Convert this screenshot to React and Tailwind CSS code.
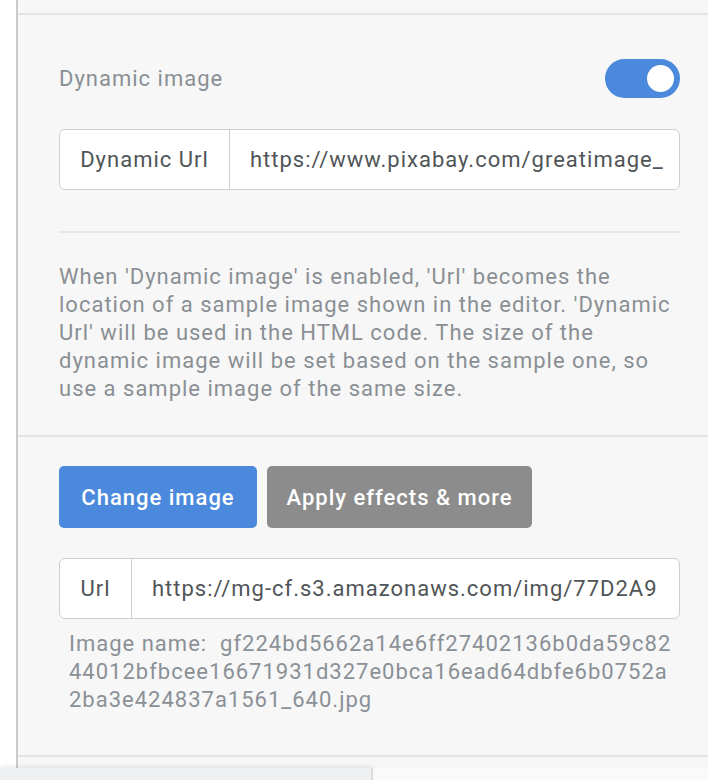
import React, { useState } from 'react';

const font = { fontFamily: 'Roboto, "Liberation Sans", sans-serif' };

function InputGroup({ label, value, labelWidth }) {
  return (
    <div className="flex h-[61px] rounded-md border border-[#cfcfcf] bg-white overflow-hidden">
      <div
        className={`${labelWidth} shrink-0 flex items-center justify-center border-r border-[#cfcfcf] text-[22px] text-[#505558]`}
      >
        {label}
      </div>
      <div className="flex-1 flex items-center pl-5 text-[22px] text-[#505558] whitespace-nowrap overflow-hidden">
        {value}
      </div>
    </div>
  );
}

export default function App() {
  const [dynamic, setDynamic] = useState(true);

  return (
    <div className="relative w-[708px] h-[780px] overflow-hidden bg-white flex tracking-[1px]" style={font}>
      {/* left gutter */}
      <div className="w-4 shrink-0 bg-white" />

      {/* Panel */}
      <div className="flex-1 border-l-2 border-[#cacaca] bg-[#f7f7f7] flex flex-col">
        <div className="h-[15px] border-b-2 border-[#e1e5ea]" />

        {/* Dynamic image section */}
        <div className="pl-[41px] pr-[28px] pt-[44px] pb-[32px] border-b-2 border-[#e1e5ea]">
          <div className="flex items-center justify-between h-[39px]">
            <span className="text-[22px] text-[#8a8f94]">Dynamic image</span>
            <button
              onClick={() => setDynamic(!dynamic)}
              className={`w-[75px] h-[39px] rounded-full flex items-center px-[6px] ${
                dynamic ? 'bg-[#4a89dc] justify-end' : 'bg-[#cfcfcf] justify-start'
              }`}
            >
              <span className="w-[27px] h-[27px] rounded-full bg-white block" />
            </button>
          </div>

          <div className="mt-[31px]">
            <InputGroup
              label="Dynamic Url"
              labelWidth="w-[170px]"
              value="https://www.pixabay.com/greatimage_"
            />
          </div>

          <div className="mt-[41px] border-t-2 border-[#e8e8e8]" />

          <p className="mt-[30px] text-[22px] leading-[28px] text-[#8a8f94]">
            When 'Dynamic image' is enabled, 'Url' becomes the location of a sample image shown in
            the editor. 'Dynamic Url' will be used in the HTML code. The size of the dynamic image
            will be set based on the sample one, so use a sample image of the same size.
          </p>
        </div>

        {/* Image section */}
        <div className="pl-[41px] pr-[28px] pt-[29px] pb-[41px] border-b-2 border-[#e1e5ea]">
          <div className="flex gap-[10px]">
            <button className="h-[62px] w-[198px] rounded-[5px] bg-[#4a89dc] text-white text-[22px] font-medium">
              Change image
            </button>
            <button className="h-[62px] w-[265px] rounded-[5px] bg-[#8c8c8c] text-white text-[22px] font-medium">
              Apply effects &amp; more
            </button>
          </div>

          <div className="mt-[30px]">
            <InputGroup
              label="Url"
              labelWidth="w-[72px]"
              value="https://mg-cf.s3.amazonaws.com/img/77D2A9"
            />
          </div>

          <p className="mt-[11px] pl-[10px] text-[22px] leading-[28px] text-[#8a9096] break-all">
            Image name:&nbsp; gf224bd5662a14e6ff27402136b0da59c8244012bfbcee16671931d327e0bca16ead64dbfe6b0752a2ba3e424837a1561_640.jpg
          </p>
        </div>
      </div>

      {/* floating bottom bar */}
      <div className="absolute left-0 bottom-0 w-[373px] h-3 bg-[#eff0f2] border-r-2 border-[#dcdcdc] shadow-[0_-2px_4px_rgba(0,0,0,0.08)]" />
      <div className="absolute left-[373px] right-0 bottom-0 h-3 bg-[#fafafa]" />
    </div>
  );
}
